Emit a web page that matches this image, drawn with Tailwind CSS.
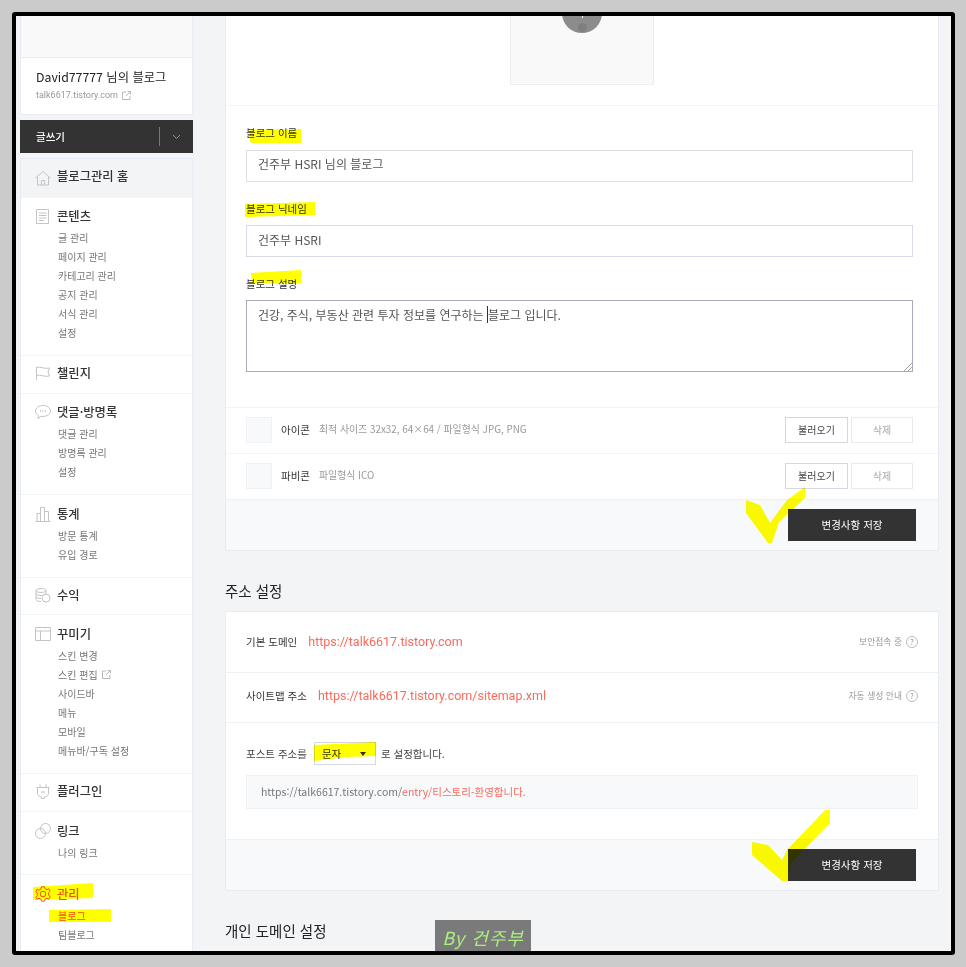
<!DOCTYPE html>
<html lang="ko">
<head>
  <meta charset="UTF-8" />
  <meta name="viewport" content="width=device-width, initial-scale=1.0" />
  <title>블로그 관리</title>
  <script src="https://cdn.jsdelivr.net/npm/@tailwindcss/browser@4"></script>
</head>
<body class="bg-[#cbcbcb] font-['Noto_Sans_CJK_KR','Noto_Sans',sans-serif] min-h-screen overflow-hidden">
  <div class="relative w-[966px] h-[967px] pt-[12px] pl-[12px]">
    <!-- framed screenshot -->
    <div class="w-[943px] h-[943px] border-4 border-black rounded-[3px] overflow-hidden bg-[#f3f4f6] flex">

      <!-- sidebar -->
      <aside class="w-[173px] ml-[4px] shrink-0 flex flex-col">
        <div class="h-[41px] bg-[#f9f9f9] border-x border-[#e8ebf3]"></div>
        <div class="h-[58px] bg-white border border-[#e8ebf3] px-[15px] pt-[9px]">
          <p class="text-[12.3px] leading-[20px] text-[#222]">David77777 님의 블로그</p>
          <p class="flex items-center gap-[4px] font-['Roboto',sans-serif] text-[9px] leading-[16px] text-[#999]">talk6617.tistory.com
            <svg class="w-[9px] h-[9px]" viewBox="0 0 9 9" fill="none" stroke="#aaa" stroke-width="0.8"><path d="M4 1H.5v7.500h7.500V5M4 5l4.500-4.500M5.500.5h3v3"/></svg>
          </p>
        </div>
        <div class="h-[33px] mt-[5px] bg-[#333] flex items-center text-white">
          <span class="flex-1 pl-[16px] text-[10.5px] font-medium">글쓰기</span>
          <span class="w-px h-[19px] bg-[#777]"></span>
          <span class="w-[33px] flex justify-center">
            <svg class="w-[9px] h-[6px]" viewBox="0 0 9 6" fill="none" stroke="#999"><path d="M1 1l3.500 3.500L8 1"/></svg>
          </span>
        </div>
        <nav class="mt-[5px] flex-1 bg-white border-x border-t border-[#e8ebf3]">
          <div class="h-[39px] bg-[#f3f4f6] flex items-center pb-[4px] pl-[14px] gap-[6px]">
            <svg class="w-[16px] h-[16px] mt-[3px]" viewBox="0 0 16 16" fill="none" stroke="#c4c4c4"><path d="M.5 8L8 1.500 15.500 8M2.500 7v8h11V7M6.500 15v-4.500h3V15"/></svg>
            <span class="text-[12.3px] font-medium text-[#333]">블로그관리 홈</span>
          </div>

          <section class="pt-[8px] pb-[13px] border-b border-[#f2f3f6]">
            <div class="h-[20px] flex items-center pl-[15px] gap-[7px]">
              <svg class="w-[14px] h-[15px]" viewBox="0 0 14 15" fill="none" stroke="#c4c4c4"><path d="M.5.500h12v14h-12zM3 4h7.500M3 6.500h7.500M3 9h7.500M3 11.500h5"/></svg>
              <span class="text-[12.3px] font-medium text-[#333]">콘텐츠</span>
            </div>
            <ul class="mt-[2px] pl-[37px] text-[10px] text-[#777] [&>li]:h-[19px] [&>li]:leading-[19px]">
              <li>글 관리</li><li>페이지 관리</li><li>카테고리 관리</li><li>공지 관리</li><li>서식 관리</li><li>설정</li>
            </ul>
          </section>

          <section class="pt-[7px] pb-[10px] border-b border-[#f2f3f6]">
            <div class="h-[20px] flex items-center pl-[14px] gap-[6px]">
              <svg class="w-[16px] h-[15px]" viewBox="0 0 16 15" fill="none" stroke="#c4c4c4"><path d="M1.500 1v13M1.500 1.500c4-1.500 8 2 13 .5l-1.500 4 1.500 4c-5 1.500-9-2-13-.5"/></svg>
              <span class="text-[12.3px] font-medium text-[#333]">챌린지</span>
            </div>
          </section>

          <section class="pt-[8px] pb-[13px] border-b border-[#f2f3f6]">
            <div class="h-[20px] flex items-center pl-[14px] gap-[6px]">
              <svg class="w-[16px] h-[14px]" viewBox="0 0 16 14" fill="none" stroke="#c4c4c4"><path d="M8 .5c4 0 7.500 2.500 7.500 5.500S12 11.500 8 11.500c-.8 0-1.500 0-2-.2L3 13.500l.5-3C1.500 9.500.5 8 .5 6 .5 3 4 .5 8 .5z"/><path d="M5 6h1M7.500 6h1M10 6h1" stroke="#999"/></svg>
              <span class="text-[12.3px] font-medium text-[#333]">댓글·방명록</span>
            </div>
            <ul class="mt-[2px] pl-[37px] text-[10px] text-[#777] [&>li]:h-[19px] [&>li]:leading-[19px]">
              <li>댓글 관리</li><li>방명록 관리</li><li>설정</li>
            </ul>
          </section>

          <section class="pt-[9px] pb-[13px] border-b border-[#f2f3f6]">
            <div class="h-[20px] flex items-center pl-[14px] gap-[6px]">
              <svg class="w-[16px] h-[15px]" viewBox="0 0 16 15" fill="none" stroke="#c4c4c4"><path d="M.5 14.500h15M2 14.500V6.500h3.500v8M5.500 14.500V.5h4v14M9.500 14.500V4.500h4v10"/></svg>
              <span class="text-[12.3px] font-medium text-[#333]">통계</span>
            </div>
            <ul class="mt-[2px] pl-[37px] text-[10px] text-[#777] [&>li]:h-[19px] [&>li]:leading-[19px]">
              <li>방문 통계</li><li>유입 경로</li>
            </ul>
          </section>

          <section class="pt-[7px] pb-[9px] border-b border-[#f2f3f6]">
            <div class="h-[20px] flex items-center pl-[14px] gap-[6px]">
              <svg class="w-[16px] h-[15px]" viewBox="0 0 16 15" fill="none" stroke="#c4c4c4"><ellipse cx="6" cy="2.500" rx="5" ry="2"/><path d="M1 2.500v9c0 1 2 2 5 2M1 5.500c0 1 2 2 5 2h1M1 8.500c0 1 2 2 5 2"/><path d="M11 2.500v4"/><circle cx="11" cy="10" r="4"/></svg>
              <span class="text-[12.3px] font-medium text-[#333]">수익</span>
            </div>
          </section>

          <section class="pt-[9px] pb-[13px] border-b border-[#f2f3f6]">
            <div class="h-[20px] flex items-center pl-[14px] gap-[6px]">
              <svg class="w-[16px] h-[14px]" viewBox="0 0 16 14" fill="none" stroke="#c4c4c4"><path d="M.5.500h15v13H.5zM.5 4h15M5.500 4v9.500"/></svg>
              <span class="text-[12.3px] font-medium text-[#333]">꾸미기</span>
            </div>
            <ul class="mt-[2px] pl-[37px] text-[10px] text-[#777] [&>li]:h-[19px] [&>li]:leading-[19px]">
              <li>스킨 변경</li>
              <li class="flex items-center gap-[4px]">스킨 편집
                <svg class="w-[9px] h-[9px]" viewBox="0 0 9 9" fill="none" stroke="#aaa" stroke-width="0.8"><path d="M4 1H.5v7.500h7.500V5M4 5l4.500-4.500M5.500.5h3v3"/></svg>
              </li>
              <li>사이드바</li><li>메뉴</li><li>모바일</li><li>메뉴바/구독 설정</li>
            </ul>
          </section>

          <section class="pt-[7px] pb-[10px] border-b border-[#f2f3f6]">
            <div class="h-[20px] flex items-center pl-[15px] gap-[7px]">
              <svg class="w-[14px] h-[15px]" viewBox="0 0 14 15" fill="none" stroke="#c4c4c4"><path d="M4 .5v3M10 .5v3M.5 3.500h13M1.500 3.500v6c0 2 2 3 4 3.500v1.500h3V13c2-.5 4-1.500 4-3.500v-6M5 8h4"/></svg>
              <span class="text-[12.3px] font-medium text-[#333]">플러그인</span>
            </div>
          </section>

          <section class="pt-[9px] pb-[12px] border-b border-[#f2f3f6]">
            <div class="h-[20px] flex items-center pl-[14px] gap-[6px]">
              <svg class="w-[16px] h-[16px]" viewBox="0 0 16 16" fill="none" stroke="#c4c4c4"><circle cx="5.500" cy="10.500" r="5"/><circle cx="10.500" cy="5.500" r="5"/></svg>
              <span class="text-[12.3px] font-medium text-[#333]">링크</span>
            </div>
            <ul class="mt-[2px] pl-[37px] text-[10px] text-[#777] [&>li]:h-[19px] [&>li]:leading-[19px]">
              <li>나의 링크</li>
            </ul>
          </section>

          <section class="pt-[9px]">
            <div class="h-[20px] flex items-center pl-[14px] gap-[6px]">
              <svg class="w-[16px] h-[16px]" viewBox="0 0 16 16" fill="none" stroke="#f0522d"><circle cx="8" cy="8" r="2.800"/><path d="M6.500.8h3l.6 2 1.900.9 1.800-1 1.300 2.500-1.400 1.500v2.600l1.400 1.500-1.300 2.500-1.800-1-1.900.9-.6 2h-3l-.6-2-1.900-.9-1.800 1L.9 11.300l1.400-1.500V7.200L.9 5.700l1.300-2.500 1.800 1 1.900-.9z"/></svg>
              <span class="text-[12.3px] font-medium text-[#f0522d]">관리</span>
            </div>
            <ul class="mt-[2px] pl-[37px] text-[10px] text-[#777] [&>li]:h-[19px] [&>li]:leading-[19px]">
              <li class="text-[#f0522d]">블로그</li><li>팀블로그</li>
            </ul>
          </section>
        </nav>
      </aside>

      <!-- main column -->
      <main class="w-[714px] ml-[32px] shrink-0">
        <div class="bg-white border-x border-b border-[#e8ebf0]">
          <div class="h-[90px] border-b border-[#f3f4f6] flex justify-center">
            <div class="relative w-[144px] h-[69px] bg-[#f9f9f9] border-x border-b border-[#eeeeee] overflow-hidden">
              <div class="absolute left-[51px] top-[-23px] w-[40px] h-[40px] rounded-full bg-[#8c8c8c]">
                <span class="absolute left-[19.500px] top-[22px] w-px h-[3px] bg-white"></span>
                <span class="absolute left-[15.500px] top-[30px] w-[9px] h-[9px] rounded-full bg-[#7f7f7f]"></span>
              </div>
            </div>
          </div>

          <div class="px-[20px] pt-[20px] pb-[35px]">
            <label class="block h-[16px] leading-[14px] text-[10.5px] text-[#333]">블로그 이름</label>
            <input class="block mt-[8px] w-[667px] h-[32px] border border-[#dcdfe6] px-[11px] pb-[5px] text-[12px] text-[#555]" value="건주부 HSRI 님의 블로그" />
            <label class="block mt-[19px] h-[16px] leading-[16px] text-[10.5px] text-[#333]">블로그 닉네임</label>
            <input class="block mt-[8px] w-[667px] h-[32px] border border-[#d8dbe6] px-[11px] pb-[3px] text-[12px] text-[#555]" value="건주부 HSRI" />
            <label class="block mt-[19px] h-[16px] leading-[16px] text-[10.5px] text-[#333]">블로그 설명</label>
            <div class="relative mt-[8px] w-[667px] h-[72px] border border-[#a9a9c0] px-[11px] pt-[5px] text-[12px] leading-[18px] text-[#555]">
              건강, 주식, 부동산 관련 투자 정보를 연구하는 <span class="border-l border-[#333]">블로그 입니다.</span>
              <svg class="absolute right-0 bottom-0 w-[9px] h-[9px]" viewBox="0 0 9 9" stroke="#888" stroke-width="0.8"><path d="M1 9l8-8M5 9l4-4"/></svg>
            </div>
          </div>

          <div class="h-[46px] border-t border-[#f3f4f6] flex items-center px-[20px] pb-[2px]">
            <span class="w-[26px] h-[26px] bg-[#f8f9fb] border border-[#f0f1f4]"></span>
            <span class="ml-[9px] text-[10.5px] text-[#333]">아이콘</span>
            <span class="ml-[9px] text-[9.9px] text-[#999]">최적 사이즈 32x32, 64×64 / 파일형식 JPG, PNG</span>
            <button class="ml-auto w-[63px] h-[26px] border border-[#d5d8e0] text-[10px] text-[#444]">불러오기</button>
            <button class="ml-[3px] w-[62px] h-[26px] border border-[#e8eaf0] text-[10px] text-[#aaa] mr-[5px]">삭제</button>
          </div>
          <div class="h-[46px] border-t border-[#f3f4f6] flex items-center px-[20px] pb-[2px]">
            <span class="w-[26px] h-[26px] bg-[#f8f9fb] border border-[#f0f1f4]"></span>
            <span class="ml-[9px] text-[10.5px] text-[#333]">파비콘</span>
            <span class="ml-[9px] text-[9.9px] text-[#999]">파일형식 ICO</span>
            <button class="ml-auto w-[63px] h-[26px] border border-[#d5d8e0] text-[10px] text-[#444]">불러오기</button>
            <button class="ml-[3px] w-[62px] h-[26px] border border-[#e8eaf0] text-[10px] text-[#aaa] mr-[5px]">삭제</button>
          </div>
          <div class="h-[51px] bg-[#f8f9fb] border-t border-[#f0f1f4] flex items-start justify-end pt-[9px] pr-[22px]">
            <button class="w-[128px] h-[32px] bg-[#333] text-white text-[10.5px]">변경사항 저장</button>
          </div>
        </div>

        <h2 class="h-[60px] pt-[20px] flex items-center text-[14.5px] text-[#222]">주소 설정</h2>

        <div class="bg-white border border-[#e8ebf0]">
          <div class="h-[61px] border-b border-[#f0f1f4] flex items-center px-[20px]">
            <span class="text-[10.5px] text-[#333]">기본 도메인</span>
            <a class="ml-[11px] font-['Roboto',sans-serif] text-[12.5px] text-[#fb6a5e]">https://talk6617.tistory.com</a>
            <span class="ml-auto text-[8.8px] text-[#999]">보안접속 중</span>
            <span class="ml-[4px] w-[12px] h-[12px] rounded-full border border-[#bbb] text-[8px] leading-[10px] text-center text-[#999]">?</span>
          </div>
          <div class="h-[50px] border-b border-[#f0f1f4] flex items-center px-[20px] pb-[3px]">
            <span class="text-[10.5px] text-[#333]">사이트맵 주소</span>
            <a class="ml-[11px] font-['Roboto',sans-serif] text-[12.5px] text-[#fb6a5e]">https://talk6617.tistory.com/sitemap.xml</a>
            <span class="ml-auto text-[8.8px] text-[#999]">자동 생성 안내</span>
            <span class="ml-[4px] w-[12px] h-[12px] rounded-full border border-[#bbb] text-[8px] leading-[10px] text-center text-[#999]">?</span>
          </div>
          <div class="h-[116px] px-[20px] pt-[19px]">
            <div class="flex items-center h-[23px] text-[10.5px] text-[#444]">
              포스트 주소를
              <span class="ml-[7px] w-[62px] h-[23px] border border-[#d5d8e0] flex items-center justify-between pl-[7px] pr-[9px] text-[#333]">문자<i class="w-0 h-0 border-x-[3px] border-x-transparent border-t-[4px] border-t-[#333]"></i></span>
              <span class="ml-[5px]">로 설정합니다.</span>
            </div>
            <div class="mt-[10px] h-[34px] bg-[#f8f9fb] border border-[#f0f1f4] flex items-center pl-[14px] text-[10.5px] text-[#777]">
              https://talk6617.tistory.com/<span class="text-[#fb6a5e]">entry/티스토리-환영합니다.</span>
            </div>
          </div>
          <div class="h-[51px] bg-[#f8f9fb] border-t border-[#f0f1f4] flex items-start justify-end pt-[9px] pr-[22px]">
            <button class="w-[128px] h-[32px] bg-[#333] text-white text-[10.5px]">변경사항 저장</button>
          </div>
        </div>

        <h2 class="h-[60px] pt-[20px] flex items-center text-[14.5px] text-[#222]">개인 도메인 설정</h2>
      </main>
    </div>

    <!-- watermark -->
    <div class="absolute left-[435px] top-[920px] w-[96px] h-[31px] bg-[#7a7a7a] flex items-center justify-center pt-[3px] text-[18px] italic tracking-[1px] text-[#a9f07f]">By 건주부</div>

    <!-- yellow marker annotations -->
    <svg class="absolute left-0 top-0 w-[966px] h-[967px] mix-blend-multiply pointer-events-none" viewBox="0 0 966 967" fill="#ffff00">
      <path d="M250 130l51-1v14l-48 0-3-1z"/>
      <path d="M245 204l70-2v13l-70 2z"/>
      <path d="M251 273l50-3v13l-49 0z"/>
      <path d="M314 745l62-3v14l-30 1-32 4z"/>
      <path d="M33 887l60-4v15l-60 2z"/>
      <path d="M49 910l62-1v13l-62 0z"/>
      <path d="M746 500v13l22 30h4l7-21 26-24v-11l-18 13-17 23-10-18z"/>
      <path d="M752 842v13l30 26h6l3-18 39-40v-13h-5l-38 40-5 10-14-15z"/>
    </svg>
  </div>
</body>
</html>
